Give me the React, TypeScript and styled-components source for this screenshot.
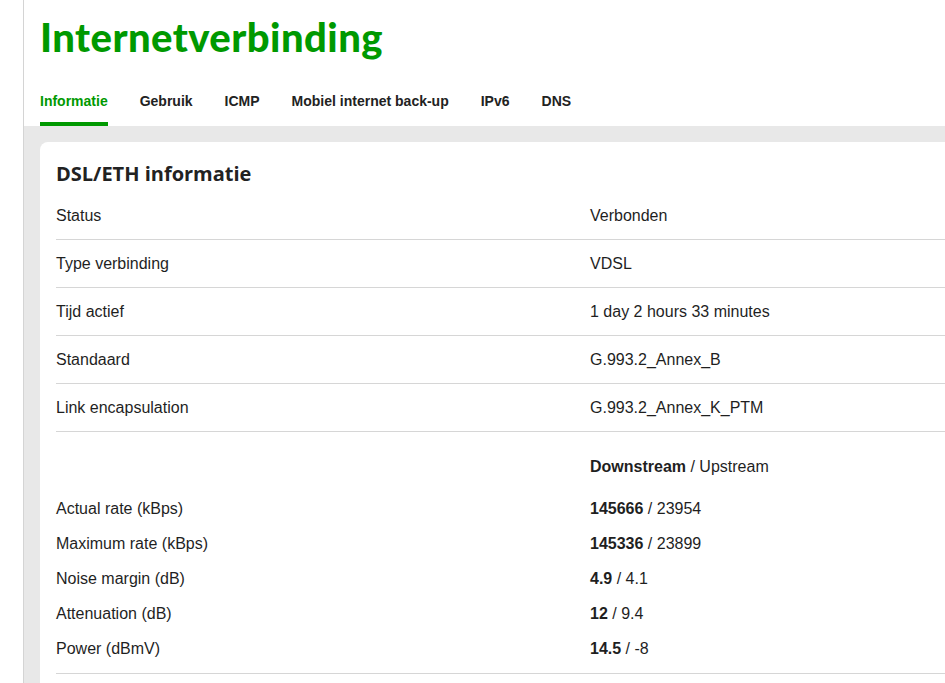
import React from "react";
import styled, { createGlobalStyle } from "styled-components";

const GlobalStyle = createGlobalStyle`
  html, body {
    margin: 0;
    padding: 0;
    background: #ffffff;
    overflow: hidden;
  }
  body {
    font-family: "Liberation Sans", Arial, sans-serif;
    color: #1f1f1f;
  }
`;

const Page = styled.div`
  display: flex;
  height: 683px;
  overflow: hidden;
`;

const Gutter = styled.div`
  flex: 0 0 23px;
  border-right: 1px solid #d4d4d4;
`;

const Content = styled.main`
  flex: 1 1 auto;
  min-width: 0;
  display: flex;
  flex-direction: column;
  overflow: hidden;
`;

const Header = styled.header`
  padding: 13px 16px 0;
`;

const Title = styled.h1`
  margin: 0;
  font-family: "Lato", "Liberation Sans", sans-serif;
  font-weight: 900;
  font-size: 40px;
  line-height: 48px;
  color: #009900;
  letter-spacing: 0.45px;
`;

const Tabs = styled.nav`
  display: flex;
  gap: 32px;
  margin-top: 32px;
`;

const Tab = styled.a<{ $active?: boolean }>`
  display: block;
  font-family: "Liberation Sans", Arial, sans-serif;
  font-weight: 700;
  font-size: 14px;
  line-height: 16px;
  padding-bottom: 13px;
  color: ${(p) => (p.$active ? "#009900" : "#222222")};
  border-bottom: 4px solid ${(p) => (p.$active ? "#009900" : "transparent")};
  text-decoration: none;
  cursor: pointer;
`;

const Body = styled.section`
  flex: 1;
  display: flex;
  background: #e8e8e8;
  padding: 16px 0 0 16px;
`;

const Card = styled.div`
  flex: 0 0 1000px;
  background: #ffffff;
  border-radius: 8px 0 0 0;
  padding: 16px 16px 0;
`;

const CardTitle = styled.h2`
  margin: 0 0 2px;
  font-family: "Open Sans", "Noto Sans", sans-serif;
  font-weight: 700;
  font-size: 20px;
  line-height: 32px;
  color: #222222;
`;

const Row = styled.div`
  display: grid;
  grid-template-columns: 534px 1fr;
  height: 47px;
  align-items: center;
  border-bottom: 1px solid #d6d6d6;
  font-size: 16px;
`;

const Label = styled.span``;

const Value = styled.span``;

const Details = styled.div`
  padding: 17px 0 7px;
  border-bottom: 1px solid #d6d6d6;
`;

const DetailRow = styled.div<{ $head?: boolean }>`
  display: grid;
  grid-template-columns: 534px 1fr;
  height: 35px;
  line-height: 35px;
  font-size: 16px;
  margin-bottom: ${(p) => (p.$head ? "7px" : "0")};
`;

const Strong = styled.b`
  font-weight: 700;
`;

const tabs = [
  "Informatie",
  "Gebruik",
  "ICMP",
  "Mobiel internet back-up",
  "IPv6",
  "DNS",
];

const info: [string, string][] = [
  ["Status", "Verbonden"],
  ["Type verbinding", "VDSL"],
  ["Tijd actief", "1 day 2 hours 33 minutes"],
  ["Standaard", "G.993.2_Annex_B"],
  ["Link encapsulation", "G.993.2_Annex_K_PTM"],
];

const stats: [string, string, string][] = [
  ["Actual rate (kBps)", "145666", "23954"],
  ["Maximum rate (kBps)", "145336", "23899"],
  ["Noise margin (dB)", "4.9", "4.1"],
  ["Attenuation (dB)", "12", "9.4"],
  ["Power (dBmV)", "14.5", "-8"],
];

export default function App() {
  return (
    <>
      <GlobalStyle />
      <Page>
        <Gutter />
        <Content>
          <Header>
            <Title>Internetverbinding</Title>
            <Tabs>
              {tabs.map((t, i) => (
                <Tab key={t} $active={i === 0}>
                  {t}
                </Tab>
              ))}
            </Tabs>
          </Header>
          <Body>
            <Card>
              <CardTitle>DSL/ETH informatie</CardTitle>
              {info.map(([l, v]) => (
                <Row key={l}>
                  <Label>{l}</Label>
                  <Value>{v}</Value>
                </Row>
              ))}
              <Details>
                <DetailRow $head>
                  <Label />
                  <Value>
                    <Strong>Downstream</Strong> / Upstream
                  </Value>
                </DetailRow>
                {stats.map(([l, d, u]) => (
                  <DetailRow key={l}>
                    <Label>{l}</Label>
                    <Value>
                      <Strong>{d}</Strong> / {u}
                    </Value>
                  </DetailRow>
                ))}
              </Details>
            </Card>
          </Body>
        </Content>
      </Page>
    </>
  );
}
